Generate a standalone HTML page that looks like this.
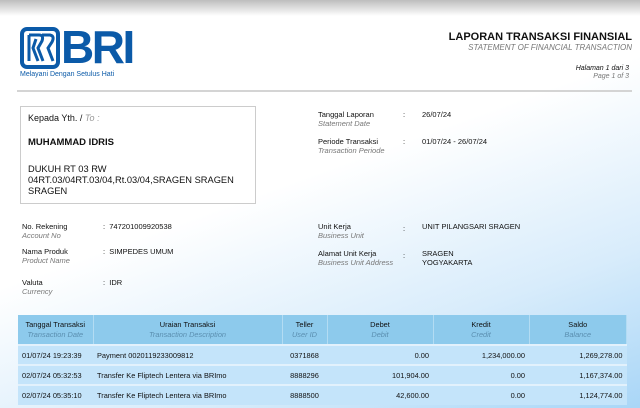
<!DOCTYPE html>
<html><head><meta charset="utf-8"><style>
*{margin:0;padding:0;box-sizing:border-box}
body{width:640px;height:408px;overflow:hidden;font-family:"Liberation Sans",sans-serif;font-size:7.5px;color:#111;position:relative;
background:linear-gradient(160deg,#fff 0%,#fff 45%,#d8ecfb 75%,#a9d6f7 100%);}
.top{position:absolute;left:0;top:0;width:640px;height:16px;background:linear-gradient(#bdbdbd,#fff)}
.a{position:absolute;white-space:nowrap}
.i{font-style:italic;color:#777}
.hr{position:absolute;left:17px;top:90px;width:615px;height:2px;background:#d4d4d4}
.box{position:absolute;left:20px;top:106px;width:236px;height:98px;border:1px solid #ccc;background:#fff}
table{position:absolute;left:18px;top:315px;width:609px;border-collapse:collapse;font-size:7.4px}
th{background:#8dcaec;font-weight:normal;height:30px;line-height:10px;border-right:1px solid #b3dcf3}
th span{display:block;font-style:italic;color:#5b8fb0}
td{height:20px;background:#c4e4fa;border-top:2px solid #e2f1fc;padding:0 4px}
.r{text-align:right}.c{text-align:center}
</style></head><body>
<div class="top"></div>
<svg class="a" style="left:20px;top:27px" width="40" height="42" viewBox="0 0 40 42">
<rect x="2" y="2" width="36" height="38" rx="5" fill="none" stroke="#0b5aa8" stroke-width="4"/>
<path d="M9 8 L19 8 Q24 8 22 14 L18 21 L23 34 M9 8 L9 34 M16 12 L13 21 L18 34 M22 8 L30 8 Q35 9 32 15 L28 21 L33 34" fill="none" stroke="#0b5aa8" stroke-width="3"/>
</svg>
<div class="a" style="left:61px;top:23px;font-size:46px;font-weight:bold;color:#0b5aa8;letter-spacing:-2.5px;line-height:48px">BRI</div>
<div class="a" style="left:20px;top:71px;font-size:7px;color:#0b5aa8">Melayani Dengan Setulus Hati</div>
<div class="a" style="right:8px;top:31px;font-size:11px;font-weight:bold;text-align:right">LAPORAN TRANSAKSI FINANSIAL</div>
<div class="a i" style="right:8px;top:43px;font-size:8px">STATEMENT OF FINANCIAL TRANSACTION</div>
<div class="a" style="right:11px;top:65px;font-style:italic;font-size:7px">Halaman 1 dari 3</div>
<div class="a i" style="right:11px;top:73px;font-size:7px">Page 1 of 3</div>
<div class="hr"></div>
<div class="box"></div>
<div class="a" style="left:28px;top:113px;font-size:9px">Kepada Yth. / <span class="i" style="color:#999">To :</span></div>
<div class="a" style="left:28px;top:137px;font-size:9.5px;font-weight:bold">MUHAMMAD IDRIS</div>
<div class="a" style="left:28px;top:164px;font-size:9.3px;line-height:11px">DUKUH RT 03 RW<br>04RT.03/04RT.03/04,Rt.03/04,SRAGEN SRAGEN<br>SRAGEN</div>
<div class="a" style="left:318px;top:110px">Tanggal Laporan<br><span class="i">Statement Date</span></div>
<div class="a" style="left:403px;top:110px">:</div><div class="a" style="left:422px;top:110px">26/07/24</div>
<div class="a" style="left:318px;top:137px">Periode Transaksi<br><span class="i">Transaction Periode</span></div>
<div class="a" style="left:403px;top:137px">:</div><div class="a" style="left:422px;top:137px">01/07/24 - 26/07/24</div>
<div class="a" style="left:22px;top:222px">No. Rekening<br><span class="i">Account No</span></div>
<div class="a" style="left:103px;top:222px">:&nbsp; 747201009920538</div>
<div class="a" style="left:22px;top:247px">Nama Produk<br><span class="i">Product Name</span></div>
<div class="a" style="left:103px;top:247px">:&nbsp; SIMPEDES UMUM</div>
<div class="a" style="left:22px;top:278px">Valuta<br><span class="i">Currency</span></div>
<div class="a" style="left:103px;top:278px">:&nbsp; IDR</div>
<div class="a" style="left:318px;top:222px">Unit Kerja<br><span class="i">Business Unit</span></div>
<div class="a" style="left:403px;top:224px">:</div><div class="a" style="left:422px;top:222px">UNIT PILANGSARI SRAGEN</div>
<div class="a" style="left:318px;top:249px">Alamat Unit Kerja<br><span class="i">Business Unit Address</span></div>
<div class="a" style="left:403px;top:251px">:</div><div class="a" style="left:422px;top:249px">SRAGEN<br>YOGYAKARTA</div>
<table>
<tr><th style="width:75px">Tanggal Transaksi<span>Transaction Date</span></th><th style="width:189px">Uraian Transaksi<span>Transaction Description</span></th><th style="width:45px">Teller<span>User ID</span></th><th style="width:106px">Debet<span>Debit</span></th><th style="width:96px">Kredit<span>Credit</span></th><th>Saldo<span>Balance</span></th></tr>
<tr><td>01/07/24 19:23:39</td><td>Payment 0020119233009812</td><td class="c">0371868</td><td class="r">0.00</td><td class="r">1,234,000.00</td><td class="r">1,269,278.00</td></tr>
<tr><td>02/07/24 05:32:53</td><td>Transfer Ke Fliptech Lentera via BRImo</td><td class="c">8888296</td><td class="r">101,904.00</td><td class="r">0.00</td><td class="r">1,167,374.00</td></tr>
<tr><td>02/07/24 05:35:10</td><td>Transfer Ke Fliptech Lentera via BRImo</td><td class="c">8888500</td><td class="r">42,600.00</td><td class="r">0.00</td><td class="r">1,124,774.00</td></tr>
</table>
</body></html>
